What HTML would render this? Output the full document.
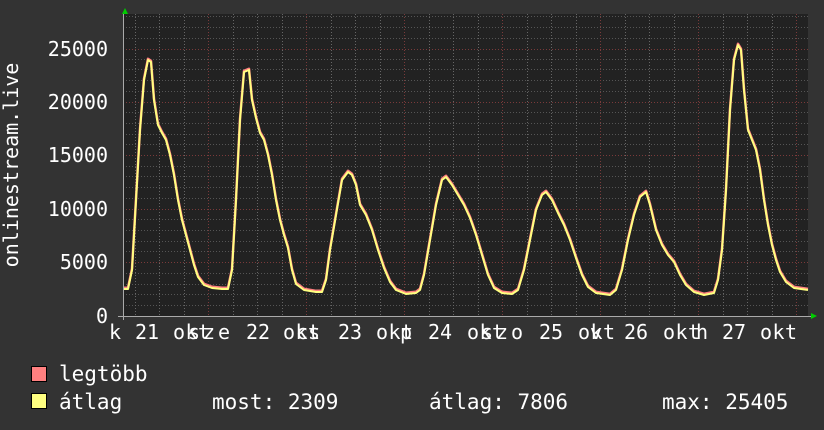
<!DOCTYPE html>
<html><head><meta charset="utf-8"><style>
html,body{margin:0;padding:0;background:#333;}
svg{display:block}
text{font-family:"DejaVu Sans Mono","Liberation Mono",monospace;fill:#fff}
</style></head><body>
<svg width="824" height="430" viewBox="0 0 824 430" xmlns="http://www.w3.org/2000/svg">
<rect width="824" height="430" fill="#333"/>
<rect x="123" y="14" width="685" height="302" fill="#222"/>
<g stroke="#555" stroke-width="1" stroke-dasharray="1,2">
<line x1="123" x2="808" y1="305.5" y2="305.5"/><line x1="123" x2="808" y1="294.5" y2="294.5"/><line x1="123" x2="808" y1="284.5" y2="284.5"/><line x1="123" x2="808" y1="273.5" y2="273.5"/>
<line x1="123" x2="808" y1="251.5" y2="251.5"/><line x1="123" x2="808" y1="241.5" y2="241.5"/><line x1="123" x2="808" y1="230.5" y2="230.5"/><line x1="123" x2="808" y1="219.5" y2="219.5"/>
<line x1="123" x2="808" y1="198.5" y2="198.5"/><line x1="123" x2="808" y1="187.5" y2="187.5"/><line x1="123" x2="808" y1="176.5" y2="176.5"/><line x1="123" x2="808" y1="166.5" y2="166.5"/>
<line x1="123" x2="808" y1="144.5" y2="144.5"/><line x1="123" x2="808" y1="134.5" y2="134.5"/><line x1="123" x2="808" y1="123.5" y2="123.5"/><line x1="123" x2="808" y1="112.5" y2="112.5"/>
<line x1="123" x2="808" y1="91.5" y2="91.5"/><line x1="123" x2="808" y1="80.5" y2="80.5"/><line x1="123" x2="808" y1="69.5" y2="69.5"/><line x1="123" x2="808" y1="59.5" y2="59.5"/>
<line x1="123" x2="808" y1="38.5" y2="38.5"/><line x1="123" x2="808" y1="27.5" y2="27.5"/><line x1="123" x2="808" y1="16.5" y2="16.5"/>
</g>
<g stroke="#666" stroke-width="1" stroke-dasharray="1,2">
<line y1="14" y2="316" x1="135.5" x2="135.5"/><line y1="14" y2="316" x1="159.5" x2="159.5"/><line y1="14" y2="316" x1="184.5" x2="184.5"/>
<line y1="14" y2="316" x1="233.5" x2="233.5"/><line y1="14" y2="316" x1="257.5" x2="257.5"/><line y1="14" y2="316" x1="282.5" x2="282.5"/>
<line y1="14" y2="316" x1="331.5" x2="331.5"/><line y1="14" y2="316" x1="355.5" x2="355.5"/><line y1="14" y2="316" x1="380.5" x2="380.5"/>
<line y1="14" y2="316" x1="429.5" x2="429.5"/><line y1="14" y2="316" x1="453.5" x2="453.5"/><line y1="14" y2="316" x1="478.5" x2="478.5"/>
<line y1="14" y2="316" x1="527.5" x2="527.5"/><line y1="14" y2="316" x1="551.5" x2="551.5"/><line y1="14" y2="316" x1="576.5" x2="576.5"/>
<line y1="14" y2="316" x1="625.5" x2="625.5"/><line y1="14" y2="316" x1="649.5" x2="649.5"/><line y1="14" y2="316" x1="674.5" x2="674.5"/>
<line y1="14" y2="316" x1="723.5" x2="723.5"/><line y1="14" y2="316" x1="747.5" x2="747.5"/><line y1="14" y2="316" x1="772.5" x2="772.5"/>
</g>
<g stroke="#7a3a3a" stroke-width="1" stroke-dasharray="1,2">
<line x1="123" x2="808" y1="262.5" y2="262.5"/><line x1="123" x2="808" y1="209.5" y2="209.5"/><line x1="123" x2="808" y1="155.5" y2="155.5"/><line x1="123" x2="808" y1="102.5" y2="102.5"/><line x1="123" x2="808" y1="49.5" y2="49.5"/>
<line y1="14" y2="316" x1="208.5" x2="208.5"/><line y1="14" y2="316" x1="306.5" x2="306.5"/><line y1="14" y2="316" x1="404.5" x2="404.5"/><line y1="14" y2="316" x1="502.5" x2="502.5"/><line y1="14" y2="316" x1="600.5" x2="600.5"/><line y1="14" y2="316" x1="698.5" x2="698.5"/><line y1="14" y2="316" x1="796.5" x2="796.5"/>
</g>
<polyline fill="none" stroke="#ff8080" stroke-width="2.5" stroke-linejoin="round" transform="translate(0,-1.2)" points="124,289 128,289 132,270 136,200 140,130 144,80 148,60 151,62 154,100 158,125 162,133 166,140 170,155 174,175 178,200 182,220 186,235 190,250 194,265 198,277 204,285 212,288 222,289 228,289 232,270 236,200 240,120 244,72 249,70 252,100 256,118 260,133 264,140 268,155 272,175 276,200 280,220 284,235 288,248 292,270 296,284 304,290 316,292 322,292 326,280 330,250 336,215 342,180 348,172 352,175 356,185 360,205 366,215 372,230 378,250 384,268 390,282 396,290 406,294 416,293 420,290 424,275 430,240 436,205 442,180 446,177 452,185 458,195 464,205 470,218 476,235 482,255 488,275 494,288 502,293 512,294 518,290 524,270 530,240 536,210 542,195 546,192 552,200 558,213 564,225 570,240 576,258 582,275 588,287 596,293 610,295 616,290 622,270 628,240 634,215 640,197 646,192 650,205 656,230 662,245 668,255 674,262 680,275 686,285 694,292 704,295 714,293 718,280 722,250 726,190 730,110 734,60 738,45 741,50 744,90 748,130 752,140 756,150 760,170 764,200 768,225 772,245 776,260 780,272 786,282 794,288 808,290"/>
<polyline fill="none" stroke="#ffff80" stroke-width="2" stroke-linejoin="round" points="124,289 128,289 132,270 136,200 140,130 144,80 148,60 151,62 154,100 158,125 162,133 166,140 170,155 174,175 178,200 182,220 186,235 190,250 194,265 198,277 204,285 212,288 222,289 228,289 232,270 236,200 240,120 244,72 249,70 252,100 256,118 260,133 264,140 268,155 272,175 276,200 280,220 284,235 288,248 292,270 296,284 304,290 316,292 322,292 326,280 330,250 336,215 342,180 348,172 352,175 356,185 360,205 366,215 372,230 378,250 384,268 390,282 396,290 406,294 416,293 420,290 424,275 430,240 436,205 442,180 446,177 452,185 458,195 464,205 470,218 476,235 482,255 488,275 494,288 502,293 512,294 518,290 524,270 530,240 536,210 542,195 546,192 552,200 558,213 564,225 570,240 576,258 582,275 588,287 596,293 610,295 616,290 622,270 628,240 634,215 640,197 646,192 650,205 656,230 662,245 668,255 674,262 680,275 686,285 694,292 704,295 714,293 718,280 722,250 726,190 730,110 734,60 738,45 741,50 744,90 748,130 752,140 756,150 760,170 764,200 768,225 772,245 776,260 780,272 786,282 794,288 808,290"/>
<line x1="118" y1="316.5" x2="812" y2="316.5" stroke="#aaa"/>
<line x1="123.5" y1="14" x2="123.5" y2="320" stroke="#aaa"/>
<polygon points="122,14 125,8 128,14" fill="#0c0"/>
<polygon points="811,313 817,316 811,319" fill="#0c0"/>
<g font-size="20" text-anchor="end">
<text x="108" y="56">25000</text><text x="108" y="109">20000</text><text x="108" y="162">15000</text><text x="108" y="216">10000</text><text x="108" y="269">5000</text><text x="108" y="323">0</text>
</g>
<text font-size="20" transform="translate(18,165) rotate(-90)" text-anchor="middle">onlinestream.live</text>
<g font-size="20">
<text x="109" y="339">k</text><text x="135" y="339">21</text><text x="173" y="339" textLength="37">okt</text>
<text x="188" y="339" textLength="42">sze</text><text x="246" y="339">22</text><text x="283" y="339" textLength="37">okt</text>
<text x="296" y="339">cs</text><text x="338" y="339">23</text><text x="376" y="339" textLength="37">okt</text>
<text x="400" y="339">p</text><text x="428" y="339">24</text><text x="467" y="339" textLength="37">okt</text>
<text x="481" y="339" textLength="42">szo</text><text x="539" y="339">25</text><text x="578" y="339" textLength="37">okt</text>
<text x="590" y="339">v</text><text x="624" y="339">26</text><text x="663" y="339" textLength="37">okt</text>
<text x="696" y="339">h</text><text x="722" y="339">27</text><text x="760" y="339" textLength="37">okt</text>
</g>
<rect x="31.5" y="366.5" width="15" height="15" fill="#ff8080" stroke="#000"/>
<rect x="31.5" y="393.5" width="15" height="15" fill="#ffff80" stroke="#000"/>
<g font-size="21">
<text x="59" y="381">legtöbb</text>
<text x="59" y="409">átlag</text>
<text x="212" y="409">most: 2309</text>
<text x="429" y="409">átlag: 7806</text>
<text x="662" y="409">max: 25405</text>
</g>
</svg>
</body></html>
